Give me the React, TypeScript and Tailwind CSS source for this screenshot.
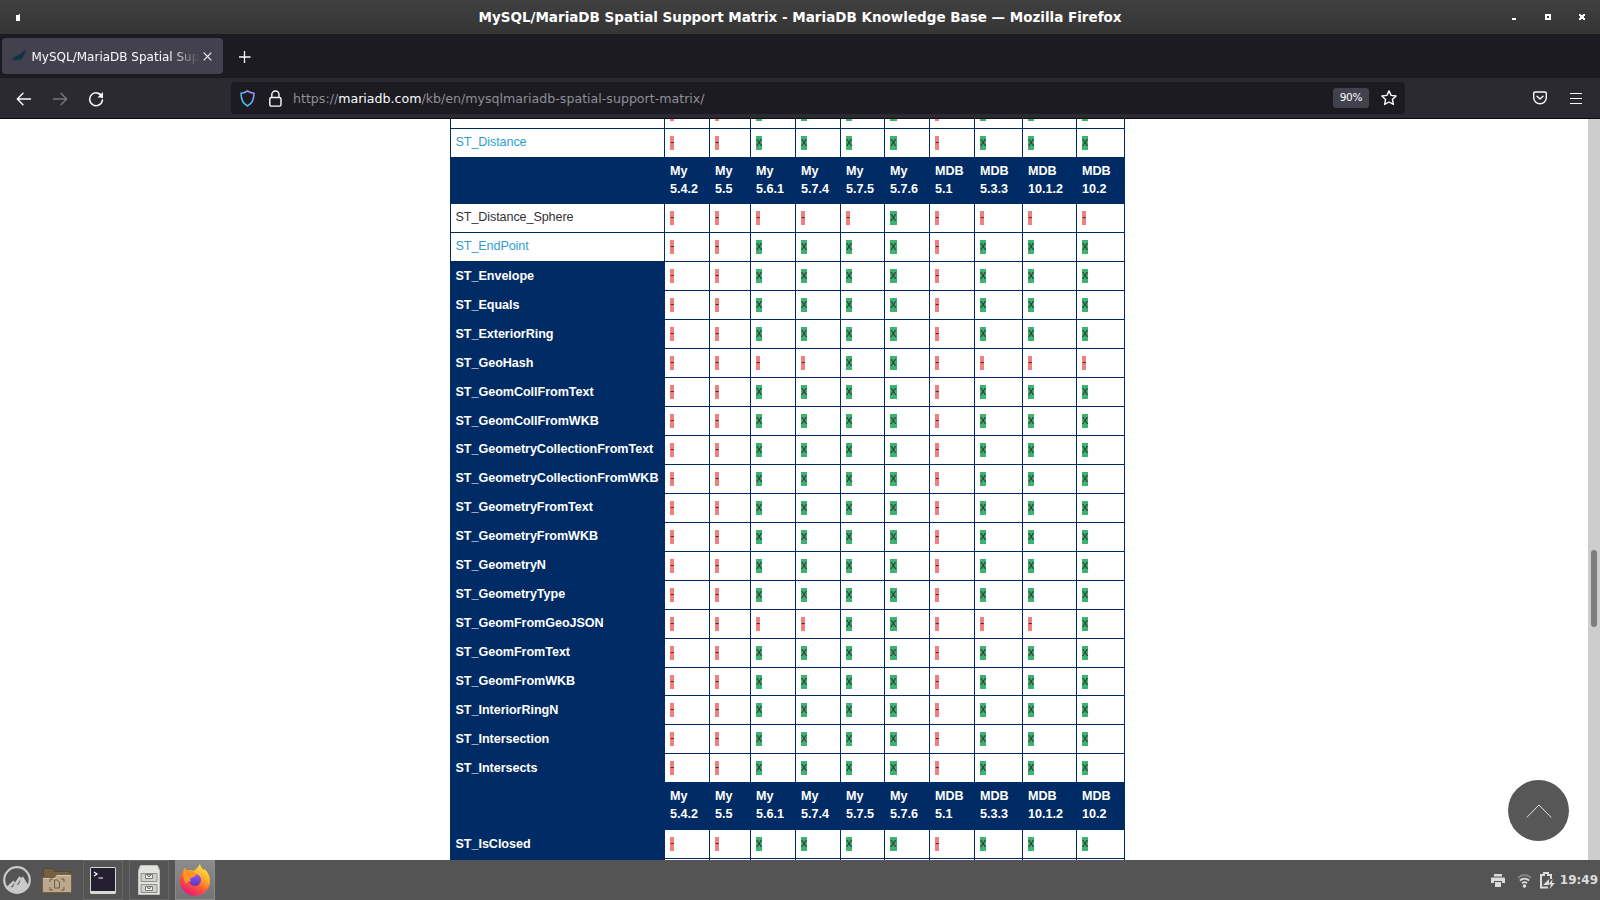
import React from "react";

const columns = [
  { vendor: "My", version: "5.4.2" },
  { vendor: "My", version: "5.5" },
  { vendor: "My", version: "5.6.1" },
  { vendor: "My", version: "5.7.4" },
  { vendor: "My", version: "5.7.5" },
  { vendor: "My", version: "5.7.6" },
  { vendor: "MDB", version: "5.1" },
  { vendor: "MDB", version: "5.3.3" },
  { vendor: "MDB", version: "10.1.2" },
  { vendor: "MDB", version: "10.2" },
];

type Row = { name: string; kind?: "link" | "plain" | "header"; marks?: string; h?: number };

const usual = "--xxxx-xxx";

const rows: Row[] = [
  { name: "ST_Disjoint", kind: "link" },
  { name: "ST_Distance", kind: "link" },
  { name: "", kind: "header", h: 46 },
  { name: "ST_Distance_Sphere", kind: "plain", marks: "-----x----" },
  { name: "ST_EndPoint", kind: "link" },
  { name: "ST_Envelope" },
  { name: "ST_Equals" },
  { name: "ST_ExteriorRing" },
  { name: "ST_GeoHash", marks: "----xx----" },
  { name: "ST_GeomCollFromText" },
  { name: "ST_GeomCollFromWKB" },
  { name: "ST_GeometryCollectionFromText" },
  { name: "ST_GeometryCollectionFromWKB" },
  { name: "ST_GeometryFromText" },
  { name: "ST_GeometryFromWKB" },
  { name: "ST_GeometryN" },
  { name: "ST_GeometryType" },
  { name: "ST_GeomFromGeoJSON", marks: "----xx---x" },
  { name: "ST_GeomFromText" },
  { name: "ST_GeomFromWKB", h: 28 },
  { name: "ST_InteriorRingN" },
  { name: "ST_Intersection" },
  { name: "ST_Intersects" },
  { name: "", kind: "header", h: 47 },
  { name: "ST_IsClosed" },
  { name: "ST_IsEmpty" },
];

const grid =
  "grid shrink-0 grid-cols-[214px_45px_41px_45px_45px_44px_45px_45px_48px_54px_49px]";

function MatrixRow({ row, offset }: { row: Row; offset: string }) {
  const height = row.h ?? 29;
  if (row.kind === "header") {
    return (
      <div className={grid + " bg-[#002b64] font-bold text-white"} style={{ height }}>
        <div />
        {columns.map((c) => (
          <div key={c.version} className="flex flex-col pt-[5px] pl-[6px] text-[12.6px] leading-[18px]">
            <span className="tracking-[-0.1px]">{c.vendor}</span>
            <span>{c.version}</span>
          </div>
        ))}
      </div>
    );
  }
  const label =
    row.kind === "link"
      ? "text-[#2f9fd0] tracking-[-0.1px]"
      : row.kind === "plain"
        ? "text-[#333] tracking-[-0.1px]"
        : "bg-[#002b64] font-bold text-white tracking-[-0.05px]";
  return (
    <div className={grid} style={{ height }}>
      <div
        className={
          "border-t border-l border-[#002b64] pl-[4.5px] text-[12.6px] leading-[18px] whitespace-nowrap " +
          offset +
          " " +
          label
        }
      >
        {row.name}
      </div>
      {(row.marks ?? usual).split("").map((m, i) => (
        <div
          key={i}
          className={
            "flex items-start border-t border-l border-[#002b64] pt-[7px] pl-[5px] text-[12.6px] leading-[12px] text-[#333]" +
            (i === 9 ? " border-r" : "")
          }
        >
          {m === "x" ? (
            <span className={"h-[14px] bg-[#3cb371] text-center " + (i === 5 ? "w-[7px]" : "w-[6px]")}>x</span>
          ) : (
            <span className="h-[14px] w-[4px] bg-[#f08080]">-</span>
          )}
        </div>
      ))}
    </div>
  );
}

// Label baselines settle on different pixels down the table.
function labelOffset(i: number) {
  if (i === 0) return "pt-[3px]";
  if ((i >= 5 && i <= 10) || i >= 20) return "pt-[5px]";
  return "pt-[4px]";
}

function TitleBar() {
  return (
    <div className="flex h-[34px] shrink-0 items-center bg-linear-to-b from-[#404040] to-[#353535] pr-[14px] pl-4">
      <div className="w-[72px]">
        <svg width="4" height="7" viewBox="0 0 4 7" shapeRendering="crispEdges"><path d="M0 1h3V0h1v7H0z" fill="#fff" /></svg>
      </div>
      <div className="flex-1 text-center font-['DejaVu_Sans',sans-serif] text-[13.5px] leading-[18px] font-bold whitespace-nowrap text-white">
        MySQL/MariaDB Spatial Support Matrix - MariaDB Knowledge Base — Mozilla Firefox
      </div>
      <svg width="74" height="8" viewBox="0 0 74 8" fill="#fff" shapeRendering="crispEdges">
        <path d="M0 5h4v2H0z" />
        <path fillRule="evenodd" d="M33 1h6v6h-6zM35 3v2h2V3z" />
        <path d="M67 1h2v1h2V1h2v2h-1v2h1v2h-2V6h-2v1h-2V5h1V3h-1z" />
      </svg>
    </div>
  );
}

function TabStrip() {
  return (
    <div className="flex h-[44px] shrink-0 items-center bg-[#1c1b22] pl-[2px] text-[#fbfbfe]">
      <div className="flex h-[36px] w-[221px] items-center rounded bg-[#42414d] pl-2">
        <svg width="17" height="12" viewBox="0 0 17 12" className="shrink-0">
          <path d="M16.500 .5 L13.500 1 L11.500 2.800 Q10.500 4.400 8.500 5 L5.500 6.300 Q3.500 8.800 .5 9.800 Q2.500 10.300 5 9.200 L4.300 10.900 Q6.500 10.300 8 9.200 Q10.300 9 11.500 10.500 Q11.900 9.500 11.200 8.500 Q14 7.500 14.400 4.500 Q14.800 2.300 16.500 .5z" fill="#0b3547" />
        </svg>
        <span className="ml-[4.500px] w-[168px] overflow-hidden mask-r-from-82% mask-r-to-100% pt-px font-['DejaVu_Sans',sans-serif] text-[12px] leading-[18px] whitespace-nowrap">
          MySQL/MariaDB Spatial Sup
        </span>
        <svg width="9" height="9" viewBox="0 0 9 9" className="ml-[3px] shrink-0" stroke="currentColor" strokeWidth="1.1"><path d="M.7.7l7.600 7.600M8.300.7L.7 8.300" /></svg>
      </div>
      <svg width="12" height="12" viewBox="0 0 12 12" className="mt-px ml-[16px]" stroke="currentColor" strokeWidth="1.300"><path d="M5.500 0v12M0 6h11.500" /></svg>
    </div>
  );
}

function Toolbar() {
  return (
    <div className="flex h-[41px] shrink-0 items-center border-b border-[#0c0c0d] bg-[#2b2a33] text-[#fbfbfe]">
      <svg width="16" height="14" viewBox="0 0 16 14" className="mt-px ml-4" fill="none" stroke="currentColor" strokeWidth="1.400" strokeLinecap="round" strokeLinejoin="round"><path d="M14.500 7H1.500M7 1.300L1.300 7 7 12.700" /></svg>
      <svg width="16" height="14" viewBox="0 0 16 14" className="mt-px ml-[20px]" fill="none" stroke="#77767e" strokeWidth="1.400" strokeLinecap="round" strokeLinejoin="round"><path d="M1.500 7h13M9 1.300L14.700 7 9 12.700" /></svg>
      <svg width="16" height="16" viewBox="0 0 16 16" className="mt-px ml-[20px]" fill="none" stroke="currentColor" strokeWidth="1.500"><path d="M14.200 6.500a6.400 6.400 0 1 0 .2 2.600M13.500 4.500A6.500 6.500 0 0 0 11 2.500" strokeLinecap="round" /><path d="M15 1v5.500H9.500z" fill="currentColor" stroke="none" /></svg>
      <div className="ml-[127px] flex h-[32px] w-[1174px] items-center rounded bg-[#1c1b22] pl-[8.500px]">
        <svg width="15" height="17" viewBox="0 0 15 17" fill="none">
          <defs><linearGradient id="shield" x1="0" y1="1" x2="1" y2="0"><stop offset="0" stopColor="#2fd3fa" /><stop offset=".45" stopColor="#5cb6f0" /><stop offset="1" stopColor="#b48df8" /></linearGradient></defs>
          <path d="M7.500 1c2 1.300 4.200 2 6.500 2.300C14 9.500 12.500 13.500 7.500 16 2.500 13.500 1 9.500 1 3.300 3.300 3 5.500 2.300 7.500 1z" stroke="url(#shield)" strokeWidth="1.500" strokeLinejoin="round" />
        </svg>
        <svg width="13" height="17" viewBox="0 0 13 17" className="ml-[14px]" fill="none" stroke="currentColor" strokeWidth="1.400"><rect x=".8" y="7.500" width="11.200" height="8.600" rx="1.500" /><path d="M2.800 7.500V4.600a3.600 3.600 0 0 1 7.200 0v2.900" /></svg>
        <span className="ml-[11.500px] pt-px font-['DejaVu_Sans',sans-serif] text-[12.6px] leading-[18px] whitespace-nowrap text-[#8f8f98]">
          https://<span className="text-[#fbfbfe]">mariadb.com</span>/kb/en/mysqlmariadb-spatial-support-matrix/
        </span>
        <div className="mr-[12px] ml-auto flex h-[20px] w-[36px] items-center justify-center rounded-[3px] bg-[#42414d] font-['DejaVu_Sans',sans-serif] text-[10.500px] tracking-[-0.2px]">90%</div>
        <svg width="16" height="16" viewBox="0 0 16 16" className="mr-2" fill="none" stroke="currentColor" strokeWidth="1.400" strokeLinejoin="round"><path d="M8 .9l2.100 4.500 5 .6-3.700 3.400 1 5L8 12l-4.400 2.400 1-5L.9 6l5-.6z" /></svg>
      </div>
      <svg width="14" height="14" viewBox="0 0 14 14" className="ml-[128px]" fill="none" stroke="currentColor" strokeWidth="1.400" strokeLinecap="round" strokeLinejoin="round"><path d="M2 1h10a1.300 1.300 0 0 1 1.300 1.300V6.500A6.300 6.300 0 0 1 .7 6.500V2.300A1.300 1.300 0 0 1 2 1zM4 5.200l3 2.900 3-2.900" /></svg>
      <svg width="12" height="11" viewBox="0 0 12 11" className="ml-[23px]" stroke="currentColor" shapeRendering="crispEdges"><path d="M0 .5h12M0 5.500h12M0 10.500h12" /></svg>
    </div>
  );
}

function TaskBar() {
  return (
    <div className="flex h-[40px] shrink-0 items-center bg-[#545454]">
      <svg width="28" height="28" viewBox="0 0 28 28" className="ml-[3px]">
        <defs><clipPath id="disc"><circle cx="14" cy="14" r="13.500" /></clipPath></defs>
        <g clipPath="url(#disc)">
          <path d="M0 26L4 20.500 10.500 14.500 12 16.500 16.500 10 18 12 20 10.500 27 22V28H0z" fill="#cacaca" />
          <path d="M7.500 21.500L12 16.500 10 21z M13.500 19.500L18 12.500 16 18z" fill="#575757" />
        </g>
        <circle cx="14" cy="14" r="12.800" fill="none" stroke="#cacaca" strokeWidth="2.200" />
      </svg>
      <svg width="30" height="26" viewBox="0 0 30 26" className="ml-[11px]">
        <path d="M1.500 11V2.500q0-1 1-1H11l2 3h15v6" fill="#755f45" stroke="#564632" />
        <path d="M.5 10.500h12l2-3h15v17q0 1-1 1h-27q-1 0-1-1z" fill="#bca88c" stroke="#75603f" />
        <path d="M1.500 11.500H13l2-3h13.500" stroke="#d8c7ad" fill="none" />
        <path d="M8 15v-3h3M19 12h3v3M8 20v3h3M19 23h3v-3M12.500 13h3l2 2v6h-5z" stroke="#6f5b40" fill="none" />
      </svg>
      <div className="ml-[11px] flex h-[40px] w-[40px] items-center justify-center border border-[#666]">
        <svg width="26" height="27" viewBox="0 0 26 27"><rect width="26" height="27" rx="1.500" fill="#d8d8d4" /><rect x="1" y="1" width="24" height="23" fill="#241f31" /><path d="M4 5l3 2-3 2M8.500 11H13" stroke="#fff" strokeWidth="1.200" fill="none" /></svg>
      </div>
      <div className="ml-[6px] flex h-[40px] w-[40px] items-center justify-center border border-[#666]">
        <svg width="22" height="30" viewBox="0 0 22 30">
          <path d="M2.500.5h17l2 5V29.500H.5V5.500z" fill="#e2e2de" stroke="#c2c2bd" />
          <path d="M3 8.500h16v8H3zM3 19.500h16v8H3z" fill="#cfcfcb" stroke="#8e8e8a" />
          <path d="M7.500 9.500h7v4h-7zM7.500 21.500h7v4h-7z" fill="#f4f4f2" stroke="#777" />
          <path d="M9 10.500q2 2 4 0M9 22.500q2 2 4 0" fill="none" stroke="#444" />
        </svg>
      </div>
      <div className="ml-[6px] flex h-[40px] w-[40px] items-center justify-center border border-[#8b8b8b] bg-linear-to-b from-[#8c8c8c] to-[#747474]">
        <svg width="32" height="32" viewBox="0 0 32 32">
          <defs>
            <linearGradient id="flame" x1=".85" y1="0" x2=".25" y2="1"><stop offset="0" stopColor="#fff44f" /><stop offset=".35" stopColor="#ffb02a" /><stop offset=".62" stopColor="#ff5a35" /><stop offset="1" stopColor="#e8117f" /></linearGradient>
            <linearGradient id="globe" x1="0" y1="0" x2="0" y2="1"><stop offset="0" stopColor="#9059ff" /><stop offset="1" stopColor="#5b37b4" /></linearGradient>
          </defs>
          <path d="M21 0c.5 3 2.500 4.500 4 6.500.2-.7.300-1.300 0-2 3.500 3 6 7.500 6 12.200A15 14.800 0 0 1 1 17C1 12.500 2.500 9 5 6.500V3.500C6 4.300 7 5.200 8 6.500c2-.7 4-.6 6 .2C17 6 19 3 21 0z" fill="url(#flame)" />
          <circle cx="16" cy="16" r="6" fill="url(#globe)" />
          <path d="M5 4c3 3 6 3 9 3.500L17 11c-1 2-4 2-5.500 3.200-.8 1.200 0 2.500.5 3.300-2.300-.5-4 .5-5 2.500C4 15 4 9 5 4z" fill="#ff9524" />
        </svg>
      </div>
      <svg width="14" height="13" viewBox="0 0 14 13" className="ml-auto" fill="#dcdcdc"><path d="M3 0h8v2.500H3zM1 3.500h12q1 0 1 1V9h-3V7H3v2H0V4.500q0-1 1-1zM4 8h6v5H4z" /></svg>
      <svg width="15" height="14" viewBox="0 0 15 14" className="mt-px ml-[12px]" fill="none" stroke="#dcdcdc" strokeWidth="1.700"><path d="M.8 3.800q6.700-5.600 13.400 0" stroke="#858585" /><path d="M2.800 6.500q4.700-3.900 9.400 0M4.900 9.100q2.600-2 5.200 0" /><circle cx="7.500" cy="12" r="1.800" fill="#dcdcdc" stroke="none" /></svg>
      <svg width="15" height="17" viewBox="0 0 15 17" className="ml-[8px]"><path d="M8 15.500H1V3h3V1h4v2h3v4" fill="none" stroke="#dcdcdc" strokeWidth="2" /><path d="M3 13l6-6v6zM12.500 7l-4 5.500h2.500l-1.500 4.500L15 11h-3z" fill="#dcdcdc" /></svg>
      <span className="mr-[2px] ml-[5px] font-['DejaVu_Sans',sans-serif] text-[12px] font-bold text-[#dcdcdc]">19:49</span>
    </div>
  );
}

export default function App() {
  return (
    <div className="flex h-[900px] w-[1600px] flex-col overflow-hidden bg-white">
      <TitleBar />
      <TabStrip />
      <Toolbar />
      <div className="relative flex min-h-0 flex-1 overflow-hidden bg-white font-['Liberation_Sans',Arial,sans-serif]">
        <div className="-mt-[20px] ml-[450px] flex w-[675px] flex-col">
          {rows.map((row, i) => (
            <MatrixRow key={i} row={row} offset={labelOffset(i)} />
          ))}
        </div>
        <div className="ml-auto w-[12px] bg-[#cdcdcd] px-[3px] pt-[431px]">
          <div className="h-[77px] rounded-full bg-[#7c7f7f]" />
        </div>
        <div className="absolute top-[661px] left-[1508px] flex h-[61px] w-[61px] items-center justify-center rounded-full bg-[#575757]">
          <svg width="26" height="14" viewBox="0 0 26 14" fill="none" stroke="#e0e0e0"><path d="M.7 13.500L13 1l12.300 12.500" /></svg>
        </div>
      </div>
      <TaskBar />
    </div>
  );
}
